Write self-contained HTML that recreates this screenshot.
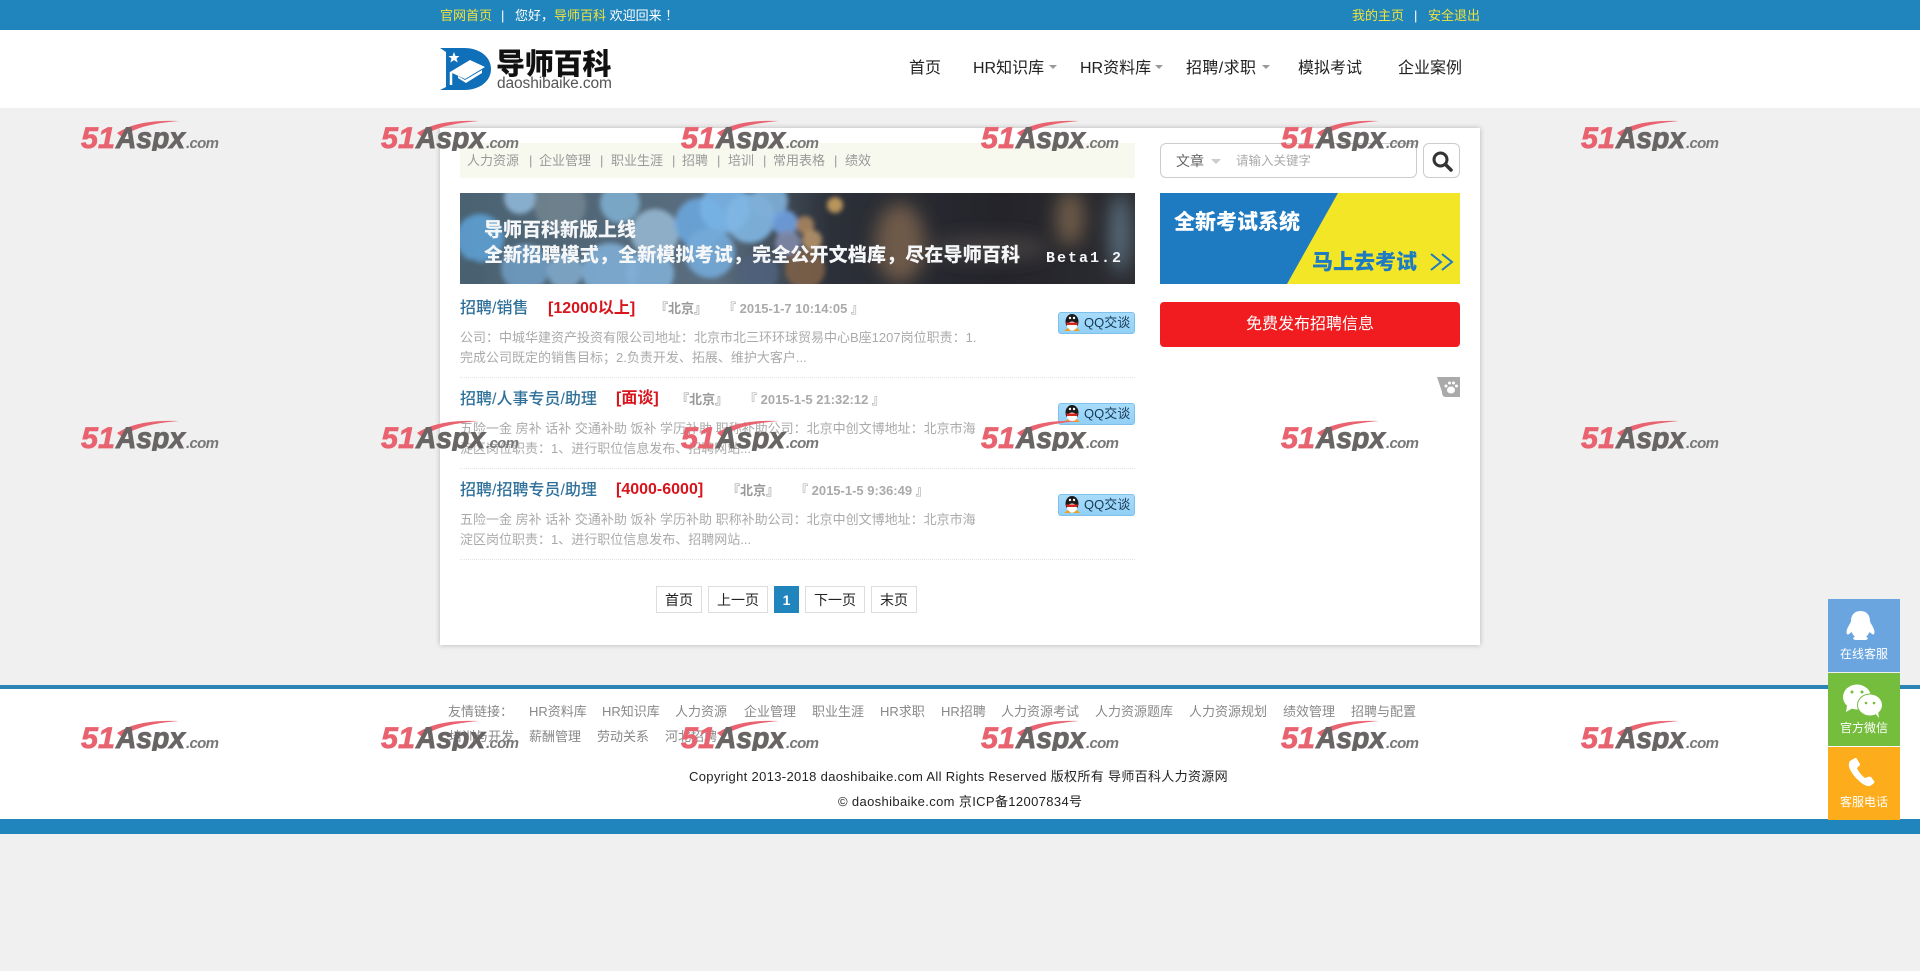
<!DOCTYPE html>
<html lang="zh-CN">
<head>
<meta charset="utf-8">
<title>导师百科</title>
<style>
*{box-sizing:border-box}
html,body{margin:0;padding:0;width:1920px;height:971px;overflow:hidden;background:#f0f0f0;font-family:"Liberation Sans","Noto Sans CJK SC",sans-serif;font-size:13px;color:#222}
.a{position:absolute}
.t{position:absolute;white-space:nowrap;line-height:20px}
.y{color:#f0e23c}.w{color:#fff}
.n{font-size:16px;color:#222;line-height:24px}
.c{position:absolute;width:0;height:0;border:4px solid transparent;border-top:4px solid #999;border-bottom:0}
.s{color:#999;font-size:13px}
.tt{font-size:16px;color:#2e7099;font-weight:500;line-height:22px}
.sal{font-size:16px;color:#d8141c;font-weight:700;line-height:22px}
.loc{font-size:13px;color:#999;font-weight:700}
.dt{font-size:13px;color:#aaa;font-weight:700}
.d{font-size:13px;color:#aaa}
.sep{position:absolute;left:460px;width:675px;border-top:1px dotted #e4e4e4;height:0}
.qq{position:absolute;left:1058px;width:77px;height:22px;border:1px solid #7fc0ea;border-radius:3px;background:linear-gradient(#a9dcfb,#92d0f6);font-size:13px;line-height:20px;color:#163a55;padding-left:25px;white-space:nowrap}
.qq svg{position:absolute;left:3px;top:0}
.p{position:absolute;top:586px;height:27px;border:1px solid #ddd;background:#fff;color:#222;font-size:14px;line-height:27px;text-align:center}
.f{color:#888;font-size:13px}
.wm{position:absolute;width:140px;height:32px;z-index:10;font-family:"Liberation Sans",sans-serif;font-weight:700;font-style:italic}
.wm .r{fill:#e8636f;stroke:#e8636f;stroke-width:.7;font-size:30px}
.wm .g{fill:#6a6565;stroke:#6a6565;stroke-width:.9;font-size:30px}
.wm .m{fill:#777;font-size:15px}
.wm path{fill:#e8636f}
.side{position:absolute;left:1828px;width:72px;height:73px;z-index:20;color:#fff;font-size:12px;text-align:center}
.side span{position:absolute;left:0;right:0;top:47px;line-height:16px}
.side svg{position:absolute;left:0;top:0}
</style>
</head>
<body>
<!-- top -->
<div class="a" style="left:0;top:0;width:1920px;height:30px;background:#2185bd"></div>
<div class="t y" style="left:440px;top:6px">官网首页</div>
<div class="t w" style="left:501px;top:6px">|</div>
<div class="t w" style="left:515px;top:6px">您好，<span class="y">导师百科</span> 欢迎回来 ！</div>
<div class="t y" style="left:1352px;top:6px">我的主页</div>
<div class="t w" style="left:1414px;top:6px">|</div>
<div class="t y" style="left:1428px;top:6px">安全退出</div>

<!-- header -->
<div class="a" style="left:0;top:30px;width:1920px;height:78px;background:#fff"></div>
<svg class="a" style="left:440px;top:47px" width="52" height="44" viewBox="0 0 52 44">
<path d="M0 1H24C40 1 51 10 51 22C51 34 40 43 24 43H0L6 40V5Z" fill="#0f6fb8"/>
<path d="M14 5l1.500 4h4l-3 2.500 1.200 4-3.700-2.400-3.700 2.400 1.200-4-3-2.500h4z" fill="#fff"/>
<path d="M10 25L30 13L45 20L25 32Z" fill="#fff"/>
<path d="M18 31L26 36L42 26L42 23L25 33L18 29Z" fill="#fff"/>
<path d="M11 25V38" stroke="#fff" stroke-width="2.500"/>
</svg>
<div class="t" style="left:496px;top:48px;font-size:29px;line-height:34px;font-weight:900;color:#111;letter-spacing:-0.200px">导师百科</div>
<div class="t" style="left:497px;top:76px;font-size:15.500px;line-height:16px;color:#555;letter-spacing:-.1px">daoshibaike.com</div>

<div class="t n" style="left:909px;top:57px">首页</div>
<div class="t n" style="left:973px;top:57px">HR知识库</div><div class="c" style="left:1049px;top:65px"></div>
<div class="t n" style="left:1080px;top:57px">HR资料库</div><div class="c" style="left:1155px;top:65px"></div>
<div class="t n" style="left:1186px;top:57px;letter-spacing:.4px">招聘/求职</div><div class="c" style="left:1262px;top:65px"></div>
<div class="t n" style="left:1298px;top:57px">模拟考试</div>
<div class="t n" style="left:1398px;top:57px">企业案例</div>

<!-- card -->
<div class="a" style="left:440px;top:128px;width:1040px;height:517px;background:#fff;box-shadow:0 0 5px rgba(0,0,0,.25)"></div>
<div class="a" style="left:460px;top:143px;width:675px;height:35px;background:#f7f9ef"></div>
<div class="t s" style="left:467px;top:151px">人力资源</div><div class="t s" style="left:529px;top:151px">|</div>
<div class="t s" style="left:539px;top:151px">企业管理</div><div class="t s" style="left:600px;top:151px">|</div>
<div class="t s" style="left:611px;top:151px">职业生涯</div><div class="t s" style="left:672px;top:151px">|</div>
<div class="t s" style="left:682px;top:151px">招聘</div><div class="t s" style="left:717px;top:151px">|</div>
<div class="t s" style="left:728px;top:151px">培训</div><div class="t s" style="left:763px;top:151px">|</div>
<div class="t s" style="left:773px;top:151px">常用表格</div><div class="t s" style="left:834px;top:151px">|</div>
<div class="t s" style="left:845px;top:151px">绩效</div>

<!-- banner -->
<svg class="a" style="left:460px;top:193px" width="675" height="91" viewBox="0 0 675 91">
<defs><filter id="b1"><feGaussianBlur stdDeviation="2.500"/></filter><filter id="b2"><feGaussianBlur stdDeviation="9"/></filter>
<linearGradient id="bg" x1="0" x2="1" y1="0" y2="0"><stop offset="0" stop-color="#4a6272"/><stop offset=".38" stop-color="#5a6e80"/><stop offset=".55" stop-color="#2c3038"/><stop offset=".8" stop-color="#24242a"/><stop offset="1" stop-color="#2b2c30"/></linearGradient></defs>
<rect width="675" height="91" fill="url(#bg)"/>
<g filter="url(#b2)"><ellipse cx="440" cy="50" rx="25" ry="40" fill="#6e5a48"/><ellipse cx="610" cy="25" rx="14" ry="28" fill="#6e5c48"/><ellipse cx="660" cy="40" rx="10" ry="40" fill="#5b7080"/><ellipse cx="530" cy="55" rx="60" ry="12" fill="#45403f"/></g>
<g filter="url(#b1)" fill-opacity=".9">
<circle cx="20" cy="45" r="24" fill="#5d9ed2"/><circle cx="60" cy="5" r="16" fill="#8fb6d6"/><circle cx="100" cy="12" r="26" fill="#70838f"/><circle cx="65" cy="75" r="24" fill="#6f9ac0"/><circle cx="105" cy="78" r="18" fill="#7fa7c9"/><circle cx="150" cy="78" r="28" fill="#7eacd4"/><circle cx="190" cy="80" r="24" fill="#7faed5"/><circle cx="160" cy="10" r="20" fill="#7eaccd"/><circle cx="195" cy="40" r="24" fill="#94b6cf"/><circle cx="240" cy="30" r="25" fill="#6aa5dc"/><circle cx="265" cy="15" r="25" fill="#78b2e6"/><circle cx="290" cy="25" r="25" fill="#80b6e2"/><circle cx="250" cy="60" r="25" fill="#74aad8"/><circle cx="310" cy="8" r="18" fill="#7fb0d8"/><circle cx="325" cy="30" r="13" fill="#6fa0e0"/><circle cx="345" cy="32" r="9" fill="#a8845c"/><circle cx="375" cy="12" r="8" fill="#c9a060"/><circle cx="328" cy="50" r="13" fill="#7f89a8"/><circle cx="352" cy="47" r="10" fill="#b59268"/><circle cx="345" cy="76" r="20" fill="#7d6048"/><circle cx="298" cy="80" r="20" fill="#4f627c"/><circle cx="10" cy="82" r="16" fill="#486070"/></g>
<g fill="#f4f6f8" font-family="'Noto Sans CJK SC',sans-serif" font-weight="900">
<text x="24" y="43" font-size="19">导师百科新版上线</text>
<text x="24" y="68" font-size="19" textLength="536">全新招聘模式，全新模拟考试，完全公开文档库，尽在导师百科</text>
<text x="586" y="69" font-size="15" font-family="'Liberation Mono',monospace" font-weight="700" letter-spacing="2">Beta1.2</text></g>
</svg>

<!-- jobs -->
<div class="t tt" style="left:460px;top:298px">招聘/销售</div>
<div class="t sal" style="left:548px;top:298px">[12000以上]</div>
<div class="t loc" style="left:655px;top:299px">『北京』</div>
<div class="t dt" style="left:723px;top:299px">『 2015-1-7 10:14:05 』</div>
<div class="t d" style="left:460px;top:328px">公司：中城华建资产投资有限公司地址：北京市北三环环球贸易中心B座1207岗位职责：1.</div>
<div class="t d" style="left:460px;top:348px">完成公司既定的销售目标；2.负责开发、拓展、维护大客户...</div>
<div class="sep" style="top:377px"></div>

<div class="t tt" style="left:460px;top:389px">招聘/人事专员/助理</div>
<div class="t sal" style="left:616px;top:388px">[面谈]</div>
<div class="t loc" style="left:676px;top:390px">『北京』</div>
<div class="t dt" style="left:744px;top:390px">『 2015-1-5 21:32:12 』</div>
<div class="t d" style="left:460px;top:419px">五险一金 房补 话补 交通补助 饭补 学历补助 职称补助公司：北京中创文博地址：北京市海</div>
<div class="t d" style="left:460px;top:439px">淀区岗位职责：1、进行职位信息发布、招聘网站...</div>
<div class="sep" style="top:468px"></div>

<div class="t tt" style="left:460px;top:480px">招聘/招聘专员/助理</div>
<div class="t sal" style="left:616px;top:479px">[4000-6000]</div>
<div class="t loc" style="left:727px;top:481px">『北京』</div>
<div class="t dt" style="left:795px;top:481px">『 2015-1-5 9:36:49 』</div>
<div class="t d" style="left:460px;top:510px">五险一金 房补 话补 交通补助 饭补 学历补助 职称补助公司：北京中创文博地址：北京市海</div>
<div class="t d" style="left:460px;top:530px">淀区岗位职责：1、进行职位信息发布、招聘网站...</div>
<div class="sep" style="top:559px"></div>

<div class="qq" style="top:312px"><svg width="20" height="20" viewBox="0 0 20 20"><ellipse cx="10" cy="8.500" rx="6.500" ry="7.500" fill="#1a1a1a"/><ellipse cx="10" cy="13" rx="5" ry="4.500" fill="#fff"/><path d="M4 9.500h12l-1 2.500H5z" fill="#d8261c"/><path d="M2 18h7l-3-3zM11 18h7l-3-3z" fill="#f0a020"/><circle cx="8" cy="5" r="1.200" fill="#fff"/><circle cx="12" cy="5" r="1.200" fill="#fff"/></svg>QQ交谈</div>
<div class="qq" style="top:403px"><svg width="20" height="20" viewBox="0 0 20 20"><ellipse cx="10" cy="8.500" rx="6.500" ry="7.500" fill="#1a1a1a"/><ellipse cx="10" cy="13" rx="5" ry="4.500" fill="#fff"/><path d="M4 9.500h12l-1 2.500H5z" fill="#d8261c"/><path d="M2 18h7l-3-3zM11 18h7l-3-3z" fill="#f0a020"/><circle cx="8" cy="5" r="1.200" fill="#fff"/><circle cx="12" cy="5" r="1.200" fill="#fff"/></svg>QQ交谈</div>
<div class="qq" style="top:494px"><svg width="20" height="20" viewBox="0 0 20 20"><ellipse cx="10" cy="8.500" rx="6.500" ry="7.500" fill="#1a1a1a"/><ellipse cx="10" cy="13" rx="5" ry="4.500" fill="#fff"/><path d="M4 9.500h12l-1 2.500H5z" fill="#d8261c"/><path d="M2 18h7l-3-3zM11 18h7l-3-3z" fill="#f0a020"/><circle cx="8" cy="5" r="1.200" fill="#fff"/><circle cx="12" cy="5" r="1.200" fill="#fff"/></svg>QQ交谈</div>

<!-- pagination -->
<div class="p" style="left:656px;width:46px">首页</div>
<div class="p" style="left:708px;width:60px">上一页</div>
<div class="p" style="left:774px;width:25px;background:#2185bd;border-color:#2185bd;color:#fff;font-weight:700">1</div>
<div class="p" style="left:805px;width:60px">下一页</div>
<div class="p" style="left:871px;width:46px">末页</div>

<!-- right column -->
<div class="a" style="left:1160px;top:143px;width:257px;height:35px;border:1px solid #ccc;border-radius:6px;background:#fff"></div>
<div class="t" style="left:1176px;top:151px;font-size:14px;color:#666">文章</div>
<div class="c" style="left:1211px;top:159px;border-width:5px;border-top-color:#ccc;border-bottom:0"></div>
<div class="t" style="left:1236px;top:151px;font-size:12.500px;color:#aaa">请输入关键字</div>
<div class="a" style="left:1423px;top:143px;width:37px;height:35px;border:1px solid #ccc;border-radius:6px;background:#fff"></div>
<svg class="a" style="left:1431px;top:150px" width="22" height="22" viewBox="0 0 22 22"><circle cx="9.500" cy="9.500" r="6.500" fill="none" stroke="#333" stroke-width="3"/><path d="M14.500 14.500L20 20" stroke="#333" stroke-width="3.500" stroke-linecap="round"/></svg>

<svg class="a" style="left:1160px;top:193px" width="300" height="91" viewBox="0 0 300 91">
<rect width="300" height="91" fill="#1e7bc2"/><path d="M178 0H300V91H127Z" fill="#f3e626"/>
<g font-family="'Noto Sans CJK SC',sans-serif" font-weight="900">
<text x="14" y="36" font-size="21" fill="#fff">全新考试系统</text>
<text x="152" y="76" font-size="21" fill="#1e7bc2">马上去考试</text></g>
<path d="M271 61l10 8-10 8M282 61l10 8-10 8" fill="none" stroke="#1e7bc2" stroke-width="2"/>
</svg>

<div class="a" style="left:1160px;top:302px;width:300px;height:45px;background:#f01c1f;border-radius:4px;color:#fff;font-size:16px;line-height:45px;text-align:center">免费发布招聘信息</div>
<svg class="a" style="left:1437px;top:377px" width="23" height="20" viewBox="0 0 23 20"><path d="M0 0H23V20H9C6 20 5 18 5 15Z" fill="#aaa"/><g fill="#fff"><ellipse cx="14" cy="13" rx="4" ry="3.500"/><circle cx="9" cy="9" r="1.500"/><circle cx="12.500" cy="6" r="1.500"/><circle cx="16.500" cy="6" r="1.500"/><circle cx="19.500" cy="9" r="1.500"/></g></svg>

<!-- footer -->
<div class="a" style="left:0;top:685px;width:1920px;height:134px;background:#fff;border-top:4px solid #2a85b5"></div>
<div class="a" style="left:0;top:819px;width:1920px;height:15px;background:#2185bd"></div>
<div class="t f" style="left:448px;top:702px">友情链接：</div>
<div class="t f" style="left:529px;top:702px">HR资料库</div>
<div class="t f" style="left:602px;top:702px">HR知识库</div>
<div class="t f" style="left:675px;top:702px">人力资源</div>
<div class="t f" style="left:744px;top:702px">企业管理</div>
<div class="t f" style="left:812px;top:702px">职业生涯</div>
<div class="t f" style="left:880px;top:702px">HR求职</div>
<div class="t f" style="left:941px;top:702px">HR招聘</div>
<div class="t f" style="left:1001px;top:702px">人力资源考试</div>
<div class="t f" style="left:1095px;top:702px">人力资源题库</div>
<div class="t f" style="left:1189px;top:702px">人力资源规划</div>
<div class="t f" style="left:1283px;top:702px">绩效管理</div>
<div class="t f" style="left:1351px;top:702px">招聘与配置</div>
<div class="t f" style="left:449px;top:727px">培训与开发</div>
<div class="t f" style="left:529px;top:727px">薪酬管理</div>
<div class="t f" style="left:597px;top:727px">劳动关系</div>
<div class="t f" style="left:665px;top:727px">河北招聘</div>
<div class="t" style="left:689px;top:767px;font-size:13px;color:#222;letter-spacing:.33px">Copyright 2013-2018 daoshibaike.com All Rights Reserved 版权所有 导师百科人力资源网</div>
<div class="t" style="left:838px;top:792px;font-size:13px;color:#222;letter-spacing:.36px">© daoshibaike.com 京ICP备12007834号</div>

<!-- side -->
<div class="side" style="top:599px;background:#6aa5e0"><svg width="72" height="47" viewBox="0 0 72 47"><path d="M32.500 12c-6.500 0-9.500 4.500-9.500 10 0 2-4.500 7-4.500 11 0 2.500 1.500 3 2.500 2l2.500-2c1 2 2 3.500 3.500 4.500-2.500 1-2.500 3.500 1 3.500h9c3.500 0 3.500-2.500 1-3.500 1.500-1 2.500-2.500 3.500-4.500l2.500 2c1 1 2.500.5 2.500-2 0-4-4.500-9-4.500-11 0-5.500-3-10-9.500-10z" fill="#fff"/></svg><span>在线客服</span></div>
<div class="side" style="top:673px;background:#75bd3d"><svg width="72" height="47" viewBox="0 0 72 47"><ellipse cx="29" cy="24" rx="14" ry="12.500" fill="#fff"/><path d="M19 33l-1 6 7-4z" fill="#fff"/><circle cx="24" cy="19" r="1.500" fill="#75bd3d"/><circle cx="34" cy="19" r="1.500" fill="#75bd3d"/><ellipse cx="42" cy="32" rx="12.500" ry="11" fill="#fff" stroke="#75bd3d" stroke-width="1"/><path d="M47 40l4 5-1-7z" fill="#fff"/><circle cx="38" cy="30" r="1.300" fill="#75bd3d"/><circle cx="46" cy="30" r="1.300" fill="#75bd3d"/></svg><span>官方微信</span></div>
<div class="side" style="top:747px;background:#fdac1c"><svg width="72" height="47" viewBox="0 0 72 47"><path d="M22 14l5-3c1 0 2 0 2 1l3 5c0 1 0 2-1 2l-2 2c1 3 5 8 8 10l3-1c1-1 2 0 3 0l3 4c1 1 0 2-1 3l-3 2c-3 1-8-2-13-7s-9-12-8-15c0-1 0-2 1-3z" fill="#fff"/></svg><span>客服电话</span></div>

<!-- watermarks -->
<svg class="wm" style="left:81px;top:119px" viewBox="0 0 140 32"><path d="M36 14C50 5 68 1 98 2 74 4 54 8 41 18Z"/><text class="r" x="0" y="29" textLength="34" lengthAdjust="spacingAndGlyphs">51</text><text class="g" x="35" y="29" textLength="69" lengthAdjust="spacingAndGlyphs">Aspx</text><text class="m" x="105" y="29" textLength="33">.com</text></svg>
<svg class="wm" style="left:381px;top:119px" viewBox="0 0 140 32"><path d="M36 14C50 5 68 1 98 2 74 4 54 8 41 18Z"/><text class="r" x="0" y="29" textLength="34" lengthAdjust="spacingAndGlyphs">51</text><text class="g" x="35" y="29" textLength="69" lengthAdjust="spacingAndGlyphs">Aspx</text><text class="m" x="105" y="29" textLength="33">.com</text></svg>
<svg class="wm" style="left:681px;top:119px" viewBox="0 0 140 32"><path d="M36 14C50 5 68 1 98 2 74 4 54 8 41 18Z"/><text class="r" x="0" y="29" textLength="34" lengthAdjust="spacingAndGlyphs">51</text><text class="g" x="35" y="29" textLength="69" lengthAdjust="spacingAndGlyphs">Aspx</text><text class="m" x="105" y="29" textLength="33">.com</text></svg>
<svg class="wm" style="left:981px;top:119px" viewBox="0 0 140 32"><path d="M36 14C50 5 68 1 98 2 74 4 54 8 41 18Z"/><text class="r" x="0" y="29" textLength="34" lengthAdjust="spacingAndGlyphs">51</text><text class="g" x="35" y="29" textLength="69" lengthAdjust="spacingAndGlyphs">Aspx</text><text class="m" x="105" y="29" textLength="33">.com</text></svg>
<svg class="wm" style="left:1281px;top:119px" viewBox="0 0 140 32"><path d="M36 14C50 5 68 1 98 2 74 4 54 8 41 18Z"/><text class="r" x="0" y="29" textLength="34" lengthAdjust="spacingAndGlyphs">51</text><text class="g" x="35" y="29" textLength="69" lengthAdjust="spacingAndGlyphs">Aspx</text><text class="m" x="105" y="29" textLength="33">.com</text></svg>
<svg class="wm" style="left:1581px;top:119px" viewBox="0 0 140 32"><path d="M36 14C50 5 68 1 98 2 74 4 54 8 41 18Z"/><text class="r" x="0" y="29" textLength="34" lengthAdjust="spacingAndGlyphs">51</text><text class="g" x="35" y="29" textLength="69" lengthAdjust="spacingAndGlyphs">Aspx</text><text class="m" x="105" y="29" textLength="33">.com</text></svg>
<svg class="wm" style="left:81px;top:419px" viewBox="0 0 140 32"><path d="M36 14C50 5 68 1 98 2 74 4 54 8 41 18Z"/><text class="r" x="0" y="29" textLength="34" lengthAdjust="spacingAndGlyphs">51</text><text class="g" x="35" y="29" textLength="69" lengthAdjust="spacingAndGlyphs">Aspx</text><text class="m" x="105" y="29" textLength="33">.com</text></svg>
<svg class="wm" style="left:381px;top:419px" viewBox="0 0 140 32"><path d="M36 14C50 5 68 1 98 2 74 4 54 8 41 18Z"/><text class="r" x="0" y="29" textLength="34" lengthAdjust="spacingAndGlyphs">51</text><text class="g" x="35" y="29" textLength="69" lengthAdjust="spacingAndGlyphs">Aspx</text><text class="m" x="105" y="29" textLength="33">.com</text></svg>
<svg class="wm" style="left:681px;top:419px" viewBox="0 0 140 32"><path d="M36 14C50 5 68 1 98 2 74 4 54 8 41 18Z"/><text class="r" x="0" y="29" textLength="34" lengthAdjust="spacingAndGlyphs">51</text><text class="g" x="35" y="29" textLength="69" lengthAdjust="spacingAndGlyphs">Aspx</text><text class="m" x="105" y="29" textLength="33">.com</text></svg>
<svg class="wm" style="left:981px;top:419px" viewBox="0 0 140 32"><path d="M36 14C50 5 68 1 98 2 74 4 54 8 41 18Z"/><text class="r" x="0" y="29" textLength="34" lengthAdjust="spacingAndGlyphs">51</text><text class="g" x="35" y="29" textLength="69" lengthAdjust="spacingAndGlyphs">Aspx</text><text class="m" x="105" y="29" textLength="33">.com</text></svg>
<svg class="wm" style="left:1281px;top:419px" viewBox="0 0 140 32"><path d="M36 14C50 5 68 1 98 2 74 4 54 8 41 18Z"/><text class="r" x="0" y="29" textLength="34" lengthAdjust="spacingAndGlyphs">51</text><text class="g" x="35" y="29" textLength="69" lengthAdjust="spacingAndGlyphs">Aspx</text><text class="m" x="105" y="29" textLength="33">.com</text></svg>
<svg class="wm" style="left:1581px;top:419px" viewBox="0 0 140 32"><path d="M36 14C50 5 68 1 98 2 74 4 54 8 41 18Z"/><text class="r" x="0" y="29" textLength="34" lengthAdjust="spacingAndGlyphs">51</text><text class="g" x="35" y="29" textLength="69" lengthAdjust="spacingAndGlyphs">Aspx</text><text class="m" x="105" y="29" textLength="33">.com</text></svg>
<svg class="wm" style="left:81px;top:719px" viewBox="0 0 140 32"><path d="M36 14C50 5 68 1 98 2 74 4 54 8 41 18Z"/><text class="r" x="0" y="29" textLength="34" lengthAdjust="spacingAndGlyphs">51</text><text class="g" x="35" y="29" textLength="69" lengthAdjust="spacingAndGlyphs">Aspx</text><text class="m" x="105" y="29" textLength="33">.com</text></svg>
<svg class="wm" style="left:381px;top:719px" viewBox="0 0 140 32"><path d="M36 14C50 5 68 1 98 2 74 4 54 8 41 18Z"/><text class="r" x="0" y="29" textLength="34" lengthAdjust="spacingAndGlyphs">51</text><text class="g" x="35" y="29" textLength="69" lengthAdjust="spacingAndGlyphs">Aspx</text><text class="m" x="105" y="29" textLength="33">.com</text></svg>
<svg class="wm" style="left:681px;top:719px" viewBox="0 0 140 32"><path d="M36 14C50 5 68 1 98 2 74 4 54 8 41 18Z"/><text class="r" x="0" y="29" textLength="34" lengthAdjust="spacingAndGlyphs">51</text><text class="g" x="35" y="29" textLength="69" lengthAdjust="spacingAndGlyphs">Aspx</text><text class="m" x="105" y="29" textLength="33">.com</text></svg>
<svg class="wm" style="left:981px;top:719px" viewBox="0 0 140 32"><path d="M36 14C50 5 68 1 98 2 74 4 54 8 41 18Z"/><text class="r" x="0" y="29" textLength="34" lengthAdjust="spacingAndGlyphs">51</text><text class="g" x="35" y="29" textLength="69" lengthAdjust="spacingAndGlyphs">Aspx</text><text class="m" x="105" y="29" textLength="33">.com</text></svg>
<svg class="wm" style="left:1281px;top:719px" viewBox="0 0 140 32"><path d="M36 14C50 5 68 1 98 2 74 4 54 8 41 18Z"/><text class="r" x="0" y="29" textLength="34" lengthAdjust="spacingAndGlyphs">51</text><text class="g" x="35" y="29" textLength="69" lengthAdjust="spacingAndGlyphs">Aspx</text><text class="m" x="105" y="29" textLength="33">.com</text></svg>
<svg class="wm" style="left:1581px;top:719px" viewBox="0 0 140 32"><path d="M36 14C50 5 68 1 98 2 74 4 54 8 41 18Z"/><text class="r" x="0" y="29" textLength="34" lengthAdjust="spacingAndGlyphs">51</text><text class="g" x="35" y="29" textLength="69" lengthAdjust="spacingAndGlyphs">Aspx</text><text class="m" x="105" y="29" textLength="33">.com</text></svg>
</body>
</html>
